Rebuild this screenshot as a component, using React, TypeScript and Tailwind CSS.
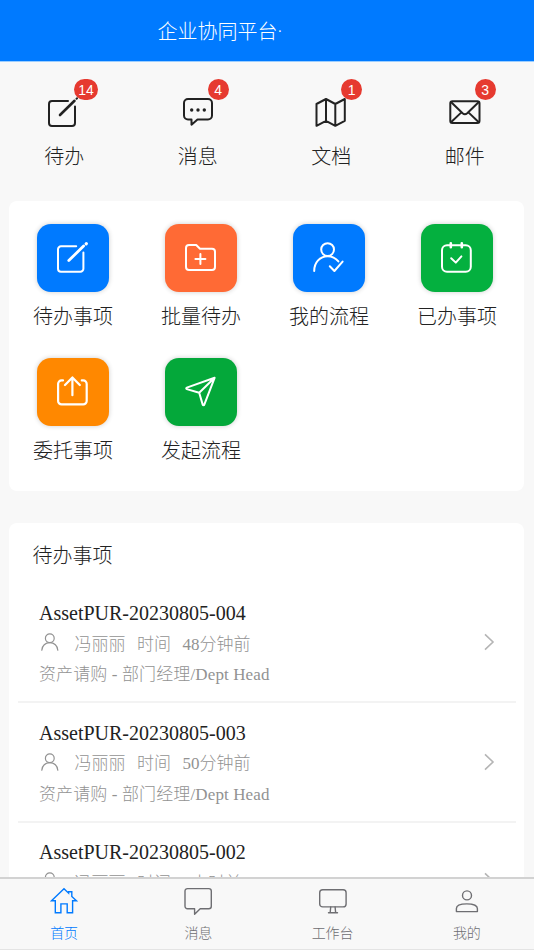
import React from "react";

const fontStack =
  "font-['Liberation_Serif','Noto_Sans_CJK_SC',serif] font-light";

const strokeProps = {
  fill: "none",
  stroke: "currentColor",
  strokeLinecap: "round" as const,
  strokeLinejoin: "round" as const,
};

const EditIcon = () => (
  <svg viewBox="0 0 32 32" className="size-8" strokeWidth="2" {...strokeProps}>
    <path d="M20 5H4a3 3 0 0 0-3 3v19a3 3 0 0 0 3 3h20a3 3 0 0 0 3-3V10.5" />
    <path d="M12 19 26.500 4.800" strokeWidth="2.6" />
    <path d="m28.500 2.800.6-.6" strokeWidth="2" />
  </svg>
);

const TileEditIcon = () => (
  <svg viewBox="0 0 32 32" className="size-8" strokeWidth="2" {...strokeProps}>
    <path d="M19.200 4.300H4a3 3 0 0 0-3 3v19.400a3 3 0 0 0 3 3h19.400a3 3 0 0 0 3-3V10.500" />
    <path d="M11.800 18.600 26.600 3.900" strokeWidth="2.8" />
    <path d="m29.200 1.800.1-.1" strokeWidth="3.2" />
  </svg>
);

const ChatIcon = () => (
  <svg viewBox="0 0 32 32" className="size-8" strokeWidth="2" {...strokeProps}>
    <path d="M6 3h20a4 4 0 0 1 4 4v12.500a4 4 0 0 1-4 4H15.500l-6 5.200v-5.200H6a4 4 0 0 1-4-4V7a4 4 0 0 1 4-4Z" />
    <g fill="currentColor" stroke="none">
      <circle cx="9.7" cy="14" r="1.7" />
      <circle cx="16" cy="14" r="1.7" />
      <circle cx="22.3" cy="14" r="1.7" />
    </g>
  </svg>
);

const MapIcon = () => (
  <svg viewBox="0 0 32 32" className="size-8" strokeWidth="2" {...strokeProps}>
    <path d="m1.500 8 9.500-5 9.300 5 9.500-5v21.800l-9.500 5-9.300-5-9.500 5ZM11 3v21.800M20.300 8v21.800" />
  </svg>
);

const MailIcon = () => (
  <svg viewBox="0 0 32 32" className="size-8" strokeWidth="2" {...strokeProps}>
    <rect x="1.3" y="5.2" width="29.2" height="21.8" rx="2.2" />
    <path d="m2 6 11.600 11.300c1.400 1.200 3.200 1.200 4.600 0L29.800 6M2 26.300l9.600-9.200M29.800 26.300l-9.600-9.200" />
  </svg>
);

const FolderIcon = () => (
  <svg viewBox="0 0 32 32" className="size-8" strokeWidth="2" {...strokeProps}>
    <path d="M4 3h7.200l3.800 3.800h12a3 3 0 0 1 3 3V25a3 3 0 0 1-3 3H4a3 3 0 0 1-3-3V6a3 3 0 0 1 3-3Z" />
    <path d="M10.400 17h10M15.400 12v10" />
  </svg>
);

const UserCheckIcon = () => (
  <svg viewBox="0 0 32 32" className="size-8" strokeWidth="2" {...strokeProps}>
    <circle cx="14.6" cy="7.6" r="6.4" />
    <path d="M1.200 29C1.200 20.600 7 14.200 14.600 14.200c4.400 0 8.200 2 10.800 5.200" />
    <path d="m16.800 24.200 4.600 4.800 8.200-9.400" />
  </svg>
);

const CalendarIcon = () => (
  <svg viewBox="0 0 32 32" className="size-8" strokeWidth="2" {...strokeProps}>
    <rect x="1" y="3.2" width="28.8" height="26.6" rx="5" />
    <path d="M9.800 1.300v4M20.800 1.300v4" strokeWidth="2.6" />
    <path d="m10.200 16.200 4.600 4.400 5.600-6.200" />
  </svg>
);

const ShareIcon = () => (
  <svg viewBox="0 0 32 32" className="size-8" strokeWidth="2.2" {...strokeProps}>
    <path d="M6 4.400H4.600A3.500 3.500 0 0 0 1.100 8v16.900a3.500 3.500 0 0 0 3.500 3.500h21.600a3.500 3.500 0 0 0 3.500-3.500V8a3.500 3.500 0 0 0-3.500-3.600h-1.400" />
    <path d="M15.400 19.200V1.500M8 9l7.400-7.600L22.800 9" />
  </svg>
);

const SendIcon = () => (
  <svg viewBox="0 0 32 32" className="size-8" strokeWidth="2" {...strokeProps}>
    <path d="M29.600 1.800 1.800 11.600c-.8.300-.8 1.200 0 1.500l12.400 3.600 3.500 11.900c.3.900 1.300.9 1.600 0ZM29.600 1.800 14.200 16.700" />
  </svg>
);

const PersonIcon = () => (
  <svg
    viewBox="0 0 18 18"
    className="size-[18px]"
    strokeWidth="1.2"
    {...strokeProps}
  >
    <circle cx="8.8" cy="5.3" r="4.4" />
    <path d="M.8 17.200c.2-4.400 3.600-7.500 8-7.500s7.800 3.100 8 7.500" />
  </svg>
);

const HomeTabIcon = () => (
  <svg
    viewBox="0 0 28 28"
    className="size-7"
    strokeWidth="1.4"
    fill="none"
    stroke="currentColor"
  >
    <path d="M1.500 13.800 14 1.800l4.600 4.400V4.800h3.200v4.600l4.600 4.400h-3.800v12h-5.400v-8.900h-6.300v8.900H5.300v-12Z" />
  </svg>
);

const ChatTabIcon = () => (
  <svg viewBox="0 0 28 28" className="size-7" strokeWidth="1.4" {...strokeProps}>
    <path d="M3.500 1.600h21.300a2.500 2.500 0 0 1 2.500 2.500v15.100a2.500 2.500 0 0 1-2.500 2.500h-8.600L10.600 27.300v-5.600H3.500A2.500 2.500 0 0 1 1 19.200V4.100a2.500 2.500 0 0 1 2.500-2.500Z" />
  </svg>
);

const MonitorTabIcon = () => (
  <svg viewBox="0 0 28 28" className="size-7" strokeWidth="1.4" {...strokeProps}>
    <rect x=".7" y="2.7" width="26.4" height="17.2" rx="3" />
    <path d="M11.700 20l-.5 5.300M16.100 20l.5 5.300M9.500 25.700h9" />
  </svg>
);

const MineTabIcon = () => (
  <svg viewBox="0 0 28 28" className="size-7" strokeWidth="1.4" {...strokeProps}>
    <circle cx="14" cy="8.4" r="4.5" />
    <path d="M3.400 24.600v-3.200c0-2.600 4-4.500 10.400-4.500s10.600 1.900 10.600 4.500v3.200Z" />
  </svg>
);

const shortcuts = [
  { label: "待办", count: 14, icon: <EditIcon /> },
  { label: "消息", count: 4, icon: <ChatIcon /> },
  { label: "文档", count: 1, icon: <MapIcon /> },
  { label: "邮件", count: 3, icon: <MailIcon /> },
];

const apps = [
  { label: "待办事项", color: "bg-[#007aff]", icon: <TileEditIcon /> },
  { label: "批量待办", color: "bg-[#ff6a35]", icon: <FolderIcon /> },
  { label: "我的流程", color: "bg-[#007aff]", icon: <UserCheckIcon /> },
  { label: "已办事项", color: "bg-[#04b03f]", icon: <CalendarIcon /> },
  { label: "委托事项", color: "bg-[#ff8800]", icon: <ShareIcon /> },
  { label: "发起流程", color: "bg-[#04a83a]", icon: <SendIcon /> },
];

const tasks = [
  { title: "AssetPUR-20230805-004", time: "48分钟前" },
  { title: "AssetPUR-20230805-003", time: "50分钟前" },
  { title: "AssetPUR-20230805-002", time: "1小时前" },
];

const tabs = [
  { label: "首页", icon: <HomeTabIcon />, color: "text-[#007aff]" },
  { label: "消息", icon: <ChatTabIcon />, color: "text-[#6e6e72]" },
  { label: "工作台", icon: <MonitorTabIcon />, color: "text-[#6e6e72]" },
  { label: "我的", icon: <MineTabIcon />, color: "text-[#6e6e72]" },
];

const App = () => {
  return (
    <div
      className={`flex h-[950px] w-[534px] flex-col overflow-hidden bg-[#f8f8f8] text-[#222] ${fontStack}`}
    >
      <header className="flex h-[61px] shrink-0 items-center bg-[#007aff] pt-[2px] pl-[157.5px] text-xl text-white">
        企业协同平台<span className="text-sm">·</span>
      </header>
      <main className="flex min-h-0 flex-1 flex-col overflow-hidden border-t border-[#9cceff]">
        <div className="mr-[2.5px] -ml-[2.5px] grid h-[139px] shrink-0 grid-cols-4 pt-[34px]">
          {shortcuts.map((item) => (
            <div key={item.label} className="flex flex-col items-center">
              <div className="relative">
                {item.icon}
                <span className="absolute -top-[17px] left-[26px] flex h-[21px] min-w-[21px] items-center justify-center rounded-full bg-[#e63a30] px-1 font-['Liberation_Sans',sans-serif] text-sm font-normal text-white">
                  {item.count}
                </span>
              </div>
              <p className="mt-[15px] text-xl leading-7">{item.label}</p>
            </div>
          ))}
        </div>

        <section className="mx-[9px] grid h-[290px] w-[515px] shrink-0 grid-cols-4 content-start rounded-lg bg-white pt-[23px] pr-[3px]">
          {apps.map((app) => (
            <div key={app.label} className="flex h-[134px] flex-col items-center">
              <div
                className={`flex h-[68px] w-[72px] items-center justify-center rounded-[14px] text-white shadow-[0_0_5px_rgba(0,0,0,0.2)] ${app.color}`}
              >
                {app.icon}
              </div>
              <p className="mt-[11px] text-xl leading-7">{app.label}</p>
            </div>
          ))}
        </section>

        <section className="mx-[9px] mt-8 w-[515px] shrink-0 rounded-t-lg bg-white px-[8.5px]">
          <h2 className="flex h-[60.5px] items-center pt-1.5 pl-[15px] text-xl">
            待办事项
          </h2>
          {tasks.map((task) => (
            <div
              key={task.title}
              className="flex h-[119.5px] items-center justify-between border-b-2 border-[#f3f3f3] pr-[21px] pl-[21.5px]"
            >
              <div className="pt-[4px]">
                <h3 className="text-xl leading-[30px]">{task.title}</h3>
                <div className="flex h-[32px] items-center gap-[11.5px] text-[17px] text-[#929292]">
                  <span className="mr-1 -mt-1 ml-[2px]">
                    <PersonIcon />
                  </span>
                  <span>冯丽丽</span>
                  <span>时间</span>
                  <span>{task.time}</span>
                </div>
                <p className="text-[17px] leading-[30px] tracking-[0.12px] text-[#929292]">
                  资产请购 - 部门经理/Dept Head
                </p>
              </div>
              <svg
                viewBox="0 0 12 18"
                className="h-[18px] w-3 text-[#b5b5b5]"
                fill="none"
                stroke="currentColor"
                strokeWidth="1.6"
              >
                <path d="m2 1.300 8 7.700-8 7.700" />
              </svg>
            </div>
          ))}
        </section>
      </main>

      <nav className="h-[73px] shrink-0 border-t-2 border-b border-t-[#d2d2d2] border-b-[#e4e4e4] bg-[#f8f8f8]">
        <div className="-ml-[3px] grid w-[537px] grid-cols-4 pt-2">
          {tabs.map((tab) => (
            <div
              key={tab.label}
              className={`flex flex-col items-center ${tab.color}`}
            >
              {tab.icon}
              <span className="mt-[9px] text-sm leading-5">{tab.label}</span>
            </div>
          ))}
        </div>
      </nav>
    </div>
  );
};

export default App;
